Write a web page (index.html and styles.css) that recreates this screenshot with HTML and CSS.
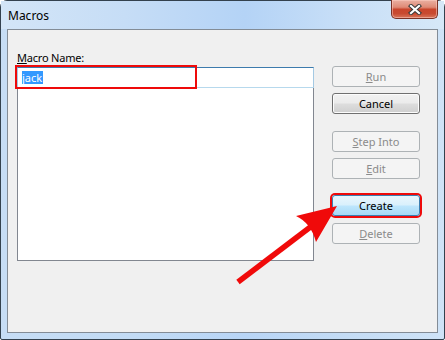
FILE: index.html
```html
<!DOCTYPE html>
<html>
<head>
<meta charset="utf-8">
<link rel="stylesheet" href="styles.css">
</head>
<body>
<div class="window">
  <div class="titlebar">
    <span class="title">Macros</span>
    <div class="close">
      <svg width="14" height="11" viewBox="0 0 14 11">
        <path d="M3 2 L11 9 M11 2 L3 9" stroke="#3a3a3a" stroke-width="4.2" stroke-linecap="square" fill="none"/>
        <path d="M3 2 L11 9 M11 2 L3 9" stroke="#ffffff" stroke-width="2.2" stroke-linecap="square" fill="none"/>
      </svg>
    </div>
  </div>
  <div class="client">
    <div class="left">
      <div class="label"><u>M</u>acro Name:</div>
      <div class="input"><span class="sel">jack</span></div>
      <div class="list"></div>
    </div>
    <div class="buttons">
      <div class="btn disabled"><span><u>R</u>un</span></div>
      <div class="btn normal gap-s">Cancel</div>
      <div class="btn disabled gap-l"><span><u>S</u>tep Into</span></div>
      <div class="btn disabled gap-s"><span><u>E</u>dit</span></div>
      <div class="btn hot gap-l2">Create</div>
      <div class="btn disabled gap-s2"><span><u>D</u>elete</span></div>
    </div>
  </div>
</div>
<div class="mark-input"></div>
<svg class="arrow" width="445" height="340" viewBox="0 0 445 340">
  <path d="M238 282 L313 225" stroke="#f00a0a" stroke-width="5.5" stroke-linecap="butt" fill="none"/>
  <path d="M337 206 L296 216 Q311 223 316 242 Z" fill="#f00a0a"/>
</svg>
</body>
</html>
```

FILE: styles.css
```css
html, body {
  margin: 0;
  padding: 0;
  width: 445px;
  height: 340px;
  overflow: hidden;
  background: #ffffff;
}

body {
  position: relative;
  font-family: "Noto Sans", "Open Sans", sans-serif;
  font-size: 11px;
  color: #000;
}

.window {
  box-sizing: border-box;
  width: 445px;
  height: 340px;
  border: 1px solid #33414e;
  border-radius: 7px 7px 2px 2px;
  padding: 0 6px 6px 6px;
  background: linear-gradient(90deg, #c6ddf5 0%, #c2dbf5 30%, #b8d5f6 55%, #c4dcf5 78%, #cfe3f7 100%);
  display: flex;
  flex-direction: column;
}

.titlebar {
  height: 28px;
  display: flex;
  justify-content: space-between;
  align-items: flex-start;
  background: linear-gradient(90deg, #d3e5f7 0%, #c6ddf6 28%, #b4d3f6 55%, #c8dff7 78%, #d6e8f8 100%);
  margin: 0 -6px;
  padding: 0 6px;
}

.title {
  align-self: center;
  padding-left: 1px;
  font-size: 12px;
  line-height: 16px;
  margin-top: 1px;
  color: #000;
}

.close {
  box-sizing: border-box;
  width: 47px;
  height: 19px;
  margin-top: -1px;
  border: 1px solid #7a3226;
  border-top: none;
  border-radius: 0 0 5px 5px;
  background: linear-gradient(180deg, #eab0a2 0%, #df8a76 40%, #c9452c 52%, #c84a30 75%, #d8755a 100%);
  display: flex;
  align-items: center;
  justify-content: center;
  box-shadow: inset 0 0 0 1px rgba(255, 210, 200, 0.5);
}

.close svg {
  display: block;
  margin-left: 1px;
}

.client {
  box-sizing: border-box;
  flex: 1;
  border: 1px solid #838c96;
  background: #f0f0f0;
  display: flex;
  align-items: flex-start;
}

.left {
  margin-left: 9px;
  padding-top: 20px;
  width: 297px;
}

.label {
  height: 15px;
  line-height: 15px;
  margin-bottom: 2px;
  color: #000;
  letter-spacing: -0.2px;
}

.input {
  box-sizing: border-box;
  height: 21px;
  background: #fff;
  border: 1px solid #a4c9e3;
  border-top-color: #3d7bad;
  border-bottom-color: #b7d9ed;
  padding-left: 4px;
  display: flex;
  align-items: center;
  position: relative;
  z-index: 1;
}

.sel {
  display: inline-block;
  background: #3399ff;
  color: #fff;
  line-height: 13px;
  height: 13px;
  padding: 0 1px 0 0;
}

.list {
  box-sizing: border-box;
  height: 174px;
  margin-top: -1px;
  background: #fff;
  border: 1px solid #828790;
}

.buttons {
  margin-left: 18px;
  padding-top: 36px;
  width: 88px;
  display: flex;
  flex-direction: column;
}

.btn {
  box-sizing: border-box;
  height: 21px;
  border-radius: 3px;
  display: flex;
  align-items: center;
  justify-content: center;
  line-height: 15px;
}

.btn.disabled {
  border: 1px solid #adb2b5;
  background: #f4f4f4;
  color: #8b8b8b;
}

.btn.normal {
  border: 1px solid #707070;
  background: linear-gradient(180deg, #f2f2f2 0%, #ebebeb 48%, #dddddd 52%, #cfcfcf 100%);
  box-shadow: inset 0 0 0 1px #fcfcfc;
}

.btn.hot {
  border: 1px solid #3c7fb1;
  background: linear-gradient(180deg, #eaf6fd 0%, #d9f0fc 48%, #bee6fd 52%, #a7d9f5 100%);
  box-shadow: 0 0 0 2px #ee0a0a;
}

.gap-s { margin-top: 6px; }
.gap-l { margin-top: 17px; }
.gap-l2 { margin-top: 16px; }
.gap-s2 { margin-top: 7px; }

.mark-input {
  position: absolute;
  z-index: 5;
  left: 15px;
  top: 65px;
  width: 182px;
  height: 24px;
  box-sizing: border-box;
  border: 2px solid #ee0a0a;
}

.arrow {
  position: absolute;
  z-index: 6;
  left: 0;
  top: 0;
  pointer-events: none;
}
```
